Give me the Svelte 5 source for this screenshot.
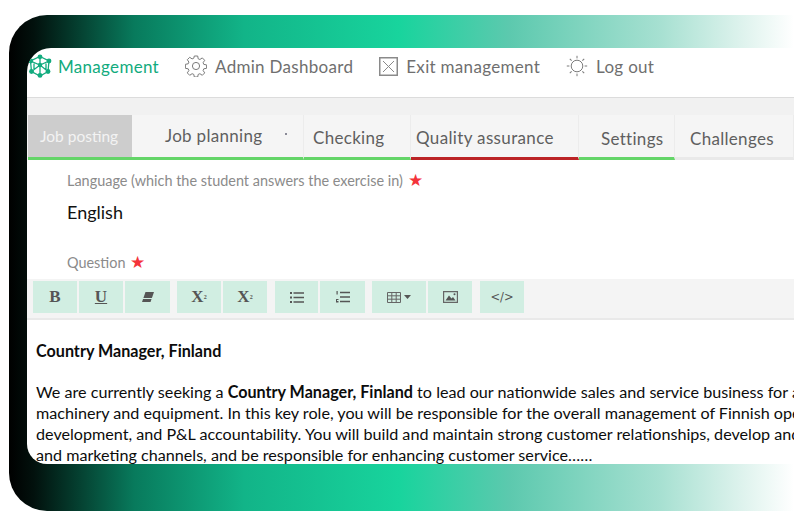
<script>
  const nav = [
    { label: 'Management', kind: 'hub', active: true },
    { label: 'Admin Dashboard', kind: 'gear' },
    { label: 'Exit management', kind: 'exit' },
    { label: 'Log out', kind: 'sun' }
  ];
  const tabs = [
    { label: 'Job posting', w: 104, bar: 'green', cls: 'active' },
    { label: 'Job planning', w: 172, bar: 'green', cls: 'plan' },
    { label: 'Checking', w: 107, bar: 'green', cls: 'check' },
    { label: 'Quality assurance', w: 168, bar: 'red', cls: 'qa' },
    { label: 'Settings', w: 96, bar: 'green', cls: 'settings' },
    { label: 'Challenges', w: 119, bar: 'none', cls: 'chal' }
  ];
  const rays = [0, 45, 90, 135, 180, 225, 270, 315];
</script>

<div class="frame">
  <div class="panel">
    <nav class="nav">
      {#each nav as item}
        <a class="nav-item {item.kind}" class:active={item.active} href="#top">
          {#if item.kind === 'hub'}
            <svg width="24" height="24" viewBox="0 0 24 24" fill="none" stroke="#12ab7e" stroke-width="1.3">
              <path d="M12 2.500 21 7 20 17.500 12 22 3.500 17.500 2.500 7Z M12 2.500V22 M2.500 7 12 11 21 7 M3.500 17.500 12 11 20 17.500 M6 9.500V16 M18 9.500V16" />
              <g fill="#12ab7e" stroke="none">
                <circle cx="12" cy="2.800" r="2.400" /><circle cx="21" cy="7" r="2.400" /><circle cx="20" cy="17.500" r="2.400" />
                <circle cx="12" cy="21.400" r="2.400" /><circle cx="3.500" cy="17.500" r="2.400" /><circle cx="2.800" cy="7" r="2.400" /><circle cx="12" cy="11" r="2.200" />
              </g>
            </svg>
          {:else if item.kind === 'gear'}
            <svg width="22" height="22" viewBox="0 0 22 22" fill="none" stroke="#7b7b7b" stroke-width="1">
              <circle cx="11" cy="11" r="3.600" />
              <path d="M9.300 1h3.400l.5 2.800 1.700.7 2.400-1.600 2.400 2.400-1.600 2.400.7 1.700 2.800.5v3.400l-2.800.5-.7 1.700 1.600 2.400-2.400 2.400-2.400-1.600-1.700.7-.5 2.600H9.300l-.5-2.600-1.700-.7-2.400 1.600-2.400-2.400 1.600-2.400-.7-1.700-2.800-.5V9.300l2.800-.5.700-1.700-1.600-2.400 2.400-2.400 2.400 1.600 1.700-.7Z" stroke-linejoin="round" />
            </svg>
          {:else if item.kind === 'exit'}
            <svg width="19" height="19" viewBox="0 0 19 19" fill="none" stroke="#8a8a8a">
              <rect x="0.750" y="0.750" width="17.500" height="17.500" stroke-width="1.500" />
              <path d="M4 4 15 15M15 4 4 15" stroke-width="1" />
            </svg>
          {:else}
            <svg width="22" height="22" viewBox="0 0 22 22" fill="none" stroke="#7b7b7b" stroke-width="1">
              <circle cx="11" cy="11" r="5.800" />
              {#each rays as r}
                <path d="M11 0.800V3.400" transform="rotate({r} 11 11)" />
              {/each}
            </svg>
          {/if}
          <span>{item.label}</span>
        </a>
      {/each}
    </nav>

    <div class="band"></div>

    <div class="tabs">
      {#each tabs as t}
        <div class="tab {t.cls} bar-{t.bar}" style="width:{t.w}px">
          <span>{t.label}</span>
          {#if t.cls === 'plan'}<i class="dot"></i>{/if}
        </div>
      {/each}
    </div>

    <div class="form">
      <div class="label">Language (which the student answers the exercise in) <b>★</b></div>
      <div class="value">English</div>
      <div class="label question">Question <b>★</b></div>
    </div>

    <div class="toolbar">
      <div class="group">
        <button class="bold">B</button>
        <button class="bold u">U</button>
        <button class="wide">
          <svg width="12" height="10" viewBox="0 0 12 10"><path d="M3.500 0H12L8.500 10H0Z" fill="#555" /><path d="M1 6.500H10" stroke="#d1eee2" /></svg>
        </button>
      </div>
      <div class="group">
        <button class="bold">X<sup>2</sup></button>
        <button class="bold">X<sub>2</sub></button>
      </div>
      <div class="group shift">
        <button class="narrow">
          <svg width="14" height="11" viewBox="0 0 14 11" fill="#555"><path d="M0 0h2v2H0zM0 4.500h2v2H0zM0 9h2v2H0zM3.500.3H14v1.400H3.500zM3.500 4.800H14v1.400H3.500zM3.500 9.300H14v1.400H3.500z" /></svg>
        </button>
        <button class="wide">
          <svg width="14" height="12" viewBox="0 0 14 12" fill="#555"><path d="M.5 0h1.200v3.500H.5zM0 8h2.500v1H1v1h1.500v1.500H0zM4 .8h10v1.400H4zM4 5.300h10v1.400H4zM4 9.800h10v1.400H4z" /></svg>
        </button>
      </div>
      <div class="group">
        <button class="table">
          <svg width="14" height="11" viewBox="0 0 14 11" fill="none" stroke="#666"><path d="M.5.500h13v10H.5zM.5 3.800h13M.5 7.200h13M4.800.5v10M9.200.5v10" /></svg>
          <svg width="7" height="4" viewBox="0 0 7 4"><path d="M0 0h7L3.500 4Z" fill="#555" /></svg>
        </button>
        <button>
          <svg width="15" height="12" viewBox="0 0 15 12"><path d="M.6.600h13.800v10.800H.6z" fill="none" stroke="#666" stroke-width="1.200" /><path d="M2.500 9.500 6 4.500l2.500 3 1.500-1.500 2.500 3.500Z" fill="#555" /><circle cx="11.500" cy="3.300" r="1" fill="#555" /></svg>
        </button>
      </div>
      <div class="group shift">
        <button class="code">&lt;/&gt;</button>
      </div>
    </div>

    <div class="content">
      <p class="title"><strong>Country Manager, Finland</strong></p>
      <p class="body">We are currently seeking a <strong>Country Manager, Finland</strong> to lead our nationwide sales and service business for a leading manufacturer of<br />machinery and equipment. In this key role, you will be responsible for the overall management of Finnish operations, including strategy, business<br />development, and P&amp;L accountability. You will build and maintain strong customer relationships, develop and lead your team, expand sales<br />and marketing channels, and be responsible for enhancing customer service……</p>
    </div>
  </div>
</div>

<style>
  :global(body) {
    margin: 0;
    background: #fff;
    overflow: hidden;
    width: 794px;
    height: 519px;
  }
  .frame {
    box-sizing: border-box;
    width: 785px;
    height: 496px;
    margin: 15px 0 0 9px;
    padding: 33px 0 47px 18px;
    border-radius: 38px 0 0 38px;
    background: linear-gradient(90deg, #000 0, #02110d 25px, #087a5c 125px, #12b488 235px, #18d49d 390px, #5cc9ae 500px, #a6e0d1 650px, #dcf2ec 730px, #fff 785px);
  }
  .panel {
    box-sizing: border-box;
    height: 416px;
    overflow: hidden;
    background: #fff;
    border-radius: 24px 0 0 20px;
  }
  .nav {
    display: flex;
    align-items: center;
    height: 36px;
    padding-bottom: 13px;
    border-bottom: 1px solid #dcdcdc;
  }
  .nav-item {
    display: flex;
    align-items: center;
    gap: 8px;
    margin-right: 26px;
    color: #6f6f6f;
    text-decoration: none;
    font: 17px Lato, sans-serif;
    letter-spacing: 0.3px;
  }
  .nav-item.active { color: #12ab7e; }
  .nav-item.hub { margin-left: 1px; gap: 6px; }
  .nav-item svg { flex: none; }
  .band { height: 17px; background: #f1f1f1; }
  .tabs { display: flex; height: 45px; background: #f5f5f5; }
  .tab {
    position: relative;
    box-sizing: border-box;
    height: 45px;
    border-bottom: 3px solid #e9e9e9;
    border-right: 1px solid #ececec;
    background: #f5f5f5;
    color: #5f5f5f;
    font: 17px Lato, sans-serif;
    letter-spacing: 0.3px;
    padding: 12px 0 0 9px;
    flex: none;
    white-space: nowrap;
  }
  .bar-green { border-bottom-color: #64d568; }
  .bar-red { border-bottom-color: #bb2426; }
  .tab.active { background: #cdcdcd; color: #f3f3f3; font-size: 15.500px; letter-spacing: 0; padding: 12px 0 0 12px; border-right: 0; margin-left: 1px; }
  .tab.plan { padding: 10px 0 0 33px; }
  .tab.qa { padding: 12px 0 0 5px; letter-spacing: 0.35px; }
  .tab.settings { padding: 13px 0 0 22px; }
  .tab.chal { padding: 13px 0 0 15px; }
  .dot {
    position: absolute;
    left: 153px;
    top: 18px;
    width: 2px;
    height: 2px;
    background: #667;
    border-radius: 50%;
  }
  .form {
    height: 120px;
    box-sizing: border-box;
    padding: 11px 0 0 40px;
  }
  .label {
    font: 14.450px Lato, sans-serif;
    color: #8b8b8b;
    line-height: 20px;
  }
  .label b { color: #f4333a; font-weight: 400; font-size: 17px; line-height: 0; margin-left: 1px; }
  .value {
    font: 18px Lato, sans-serif;
    color: #111;
    line-height: 24px;
    margin-top: 9px;
  }
  .question { margin-top: 29px; }
  .toolbar {
    display: flex;
    gap: 7px;
    box-sizing: border-box;
    height: 41px;
    padding: 2px 0 0 6px;
    background: #f4f4f4;
    border-bottom: 2px solid #e9e9e9;
    margin-top: -1px;
  }
  .group { display: flex; gap: 2px; }
  .shift { margin-left: 1px; }
  button {
    width: 44px;
    height: 32px;
    padding: 0;
    border: 0;
    background: #d1eee2;
    color: #555;
    display: flex;
    align-items: center;
    justify-content: center;
    gap: 3px;
  }
  button.narrow { width: 43px; }
  button.wide { width: 45px; }
  button.table { width: 54px; }
  .bold { font: 700 17px "Liberation Serif", serif; gap: 0; }
  .u { text-decoration: underline; }
  .bold sup, .bold sub { font-size: 6px; line-height: 0; }
  .code { font: 11.500px "DejaVu Sans", sans-serif; }
  .content {
    padding: 19.500px 0 0 9px;
    font: 16.150px/21px Lato, sans-serif;
    color: #0c0c0c;
    white-space: nowrap;
  }
  p { margin: 0; }
  .title { margin-bottom: 20px; }
</style>
